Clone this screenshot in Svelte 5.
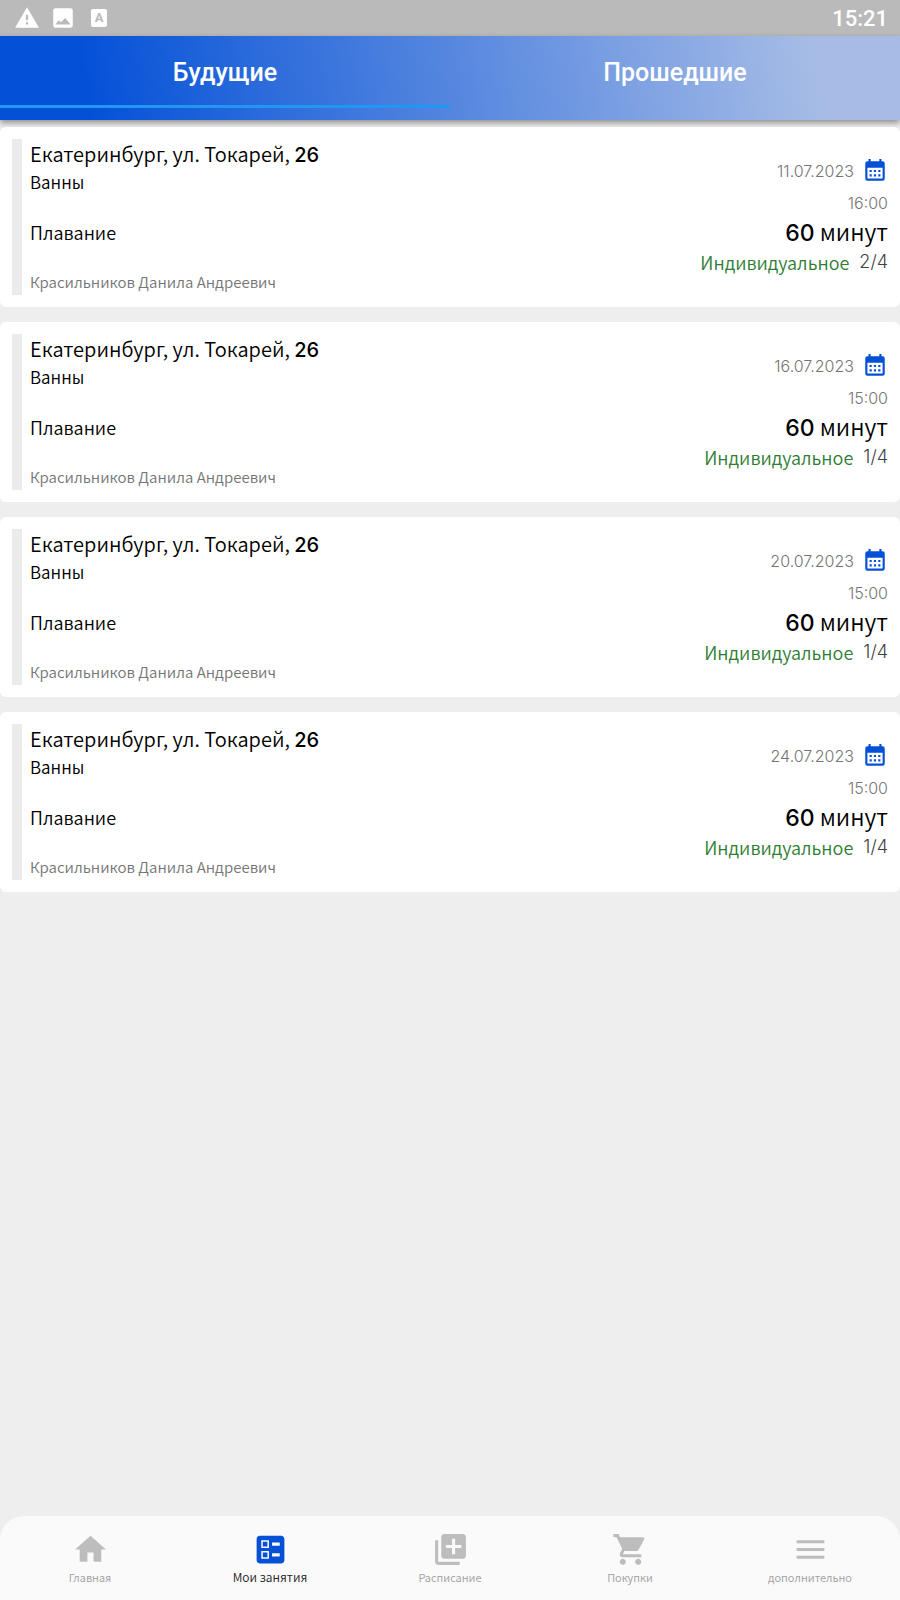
<script>
    let activeTab = "upcoming";
    let activePage = "lessons";

    const tabs = [
        { id: "upcoming", title: "Будущие" },
        { id: "past", title: "Прошедшие" },
    ];

    const lessons = [
        { date: "11.07.2023", time: "16:00", places: "2/4" },
        { date: "16.07.2023", time: "15:00", places: "1/4" },
        { date: "20.07.2023", time: "15:00", places: "1/4" },
        { date: "24.07.2023", time: "15:00", places: "1/4" },
    ];

    const pages = [
        {
            id: "home",
            title: "Главная",
            icon: "M10 20v-6h4v6h5v-8h3L12 3 2 12h3v8z",
        },
        {
            id: "lessons",
            title: "Мои занятия",
            icon: "M13 9.5h5v-2h-5v2zm0 7h5v-2h-5v2zM19 21H5c-1.1 0-2-.9-2-2V5c0-1.1.9-2 2-2h14c1.1 0 2 .9 2 2v14c0 1.1-.9 2-2 2zM6 11h5V6H6v5zm1-4h3v3H7V7zM6 18h5v-5H6v5zm1-4h3v3H7v-3z",
        },
        {
            id: "schedule",
            title: "Расписание",
            icon: "M4 6H2v14c0 1.1.9 2 2 2h14v-2H4V6zm16-4H8c-1.1 0-2 .9-2 2v12c0 1.1.9 2 2 2h12c1.1 0 2-.9 2-2V4c0-1.1-.9-2-2-2zm-1 9h-4v4h-2v-4H9V9h4V5h2v4h4v2z",
        },
        {
            id: "shop",
            title: "Покупки",
            icon: "M7 18c-1.1 0-1.99.9-1.99 2S5.9 22 7 22s2-.9 2-2-.9-2-2-2zM1 2v2h2l3.6 7.59-1.35 2.45c-.16.28-.25.61-.25.96 0 1.1.9 2 2 2h12v-2H7.42c-.14 0-.25-.11-.25-.25l.03-.12.9-1.63h7.45c.75 0 1.41-.41 1.75-1.03l3.58-6.49A1.003 1.003 0 0020 4H5.21l-.94-2H1zm16 16c-1.1 0-1.99.9-1.99 2s.89 2 1.99 2 2-.9 2-2-.9-2-2-2z",
        },
        {
            id: "more",
            title: "дополнительно",
            icon: "M3 18h18v-2H3v2zm0-5h18v-2H3v2zm0-7v2h18V6H3z",
        },
    ];
</script>

<div class="screen">
    <div class="status-bar">
        <div class="status-icons">
            <svg width="26" height="26" viewBox="0 0 24 24">
                <path d="M1 21h22L12 2 1 21zm12-3h-2v-2h2v2zm0-4h-2V9h2v5z" />
            </svg>
            <svg width="26" height="26" viewBox="0 0 24 24">
                <path
                    d="M21 19V5c0-1.1-.9-2-2-2H5c-1.1 0-2 .9-2 2v14c0 1.1.9 2 2 2h14c1.1 0 2-.9 2-2zM5 18l3-4 2 2 4-4 5 6H5z"
                />
            </svg>
            <span class="letter-icon">A</span>
        </div>
        <span class="clock">15:21</span>
    </div>

    <header class="tabs">
        {#each tabs as tab}
            <button
                class="tab"
                class:active={activeTab === tab.id}
                on:click={() => (activeTab = tab.id)}
            >
                {tab.title}
            </button>
        {/each}
    </header>

    <main class="lessons">
        {#each lessons as lesson}
            <article class="card">
                <div class="card-mark"></div>
                <div class="card-info">
                    <div class="address">
                        Екатеринбург, ул. Токарей, <span class="num">26</span>
                    </div>
                    <div class="room">Ванны</div>
                    <div class="service">Плавание</div>
                    <div class="trainer">Красильников Данила Андреевич</div>
                </div>
                <div class="card-side">
                    <div class="date">
                        {lesson.date}
                        <svg width="26" height="26" viewBox="0 0 24 24">
                            <path
                                d="M9 11v2H7v-2h2m4 0v2h-2v-2h2m4 0v2h-2v-2h2m2-8a2 2 0 0 1 2 2v14a2 2 0 0 1-2 2H5a2 2 0 0 1-2-2V5a2 2 0 0 1 2-2h1V1h2v2h8V1h2v2h1m0 16V9H5v10h14M9 15v2H7v-2h2m4 0v2h-2v-2h2m4 0v2h-2v-2h2z"
                            />
                        </svg>
                    </div>
                    <div class="time">{lesson.time}</div>
                    <div class="duration"><span class="num">60</span> минут</div>
                    <div class="kind">
                        Индивидуальное <span class="places">{lesson.places}</span>
                    </div>
                </div>
            </article>
        {/each}
    </main>

    <nav class="bottom-nav">
        {#each pages as page}
            <button
                class="nav-item"
                class:active={activePage === page.id}
                on:click={() => (activePage = page.id)}
            >
                <svg width="37" height="37" viewBox="0 0 24 24">
                    <path fill-rule="evenodd" d={page.icon} />
                </svg>
                <span class="nav-title">{page.title}</span>
            </button>
        {/each}
    </nav>
</div>

<style>
    :global(body) {
        background: #eeeeee;
    }

    .screen {
        display: flex;
        flex-direction: column;
        min-height: 100vh;
        font-family: "Noto Sans CJK JP", "Noto Sans", sans-serif;
        font-weight: 350;
        color: #000;
    }

    svg {
        display: block;
        fill: currentColor;
    }

    button {
        border: none;
        padding: 0;
        background: none;
        font-family: inherit;
        font-weight: inherit;
        cursor: pointer;
    }

    .status-bar {
        display: flex;
        align-items: center;
        justify-content: space-between;
        height: 36px;
        padding: 0 12px 0 14px;
        background: #bababa;
        color: #fff;
    }

    .status-icons {
        display: flex;
        align-items: center;
        gap: 10px;
    }

    .letter-icon {
        width: 16px;
        height: 18px;
        margin-left: 5px;
        border-radius: 2px;
        background: #fff;
        color: #bababa;
        font: bold 13px/18px Roboto, sans-serif;
        text-align: center;
    }

    .clock {
        padding-top: 2px;
        font: 500 22px/34px Roboto, sans-serif;
    }

    .tabs {
        display: flex;
        padding-bottom: 12px;
        background: linear-gradient(80deg, #0451d8 10%, #a6bce6 90%);
        box-shadow: 0 3px 6px rgba(0, 0, 0, 0.4);
    }

    .tab {
        flex: 1;
        height: 72px;
        padding-top: 3px;
        border-bottom: 3px solid transparent;
        color: #fff;
        font-family: Roboto, sans-serif;
        font-size: 25px;
        font-weight: 500;
    }

    .tab.active {
        border-bottom-color: #2196f3;
    }

    .lessons {
        flex: 1;
        display: flex;
        flex-direction: column;
        gap: 15px;
        padding: 7px 0 15px;
    }

    .card {
        display: flex;
        gap: 8px;
        padding: 12px;
        border-radius: 6px;
        background: #fff;
    }

    .card-mark {
        width: 10px;
        background: #ebebeb;
    }

    .card-info {
        flex: 1;
    }

    .num {
        font-family: Inter, sans-serif;
        font-weight: 500;
        line-height: 1;
    }

    .address {
        font-size: 20px;
        line-height: 30px;
    }

    .room {
        font-size: 17px;
        line-height: 26px;
    }

    .service {
        margin: 24px 0;
        font-size: 18px;
        line-height: 26px;
    }

    .trainer {
        color: #757575;
        font-size: 15px;
        line-height: 26px;
    }

    .card-side {
        display: flex;
        flex-direction: column;
        align-items: flex-end;
        justify-content: center;
    }

    .date,
    .time {
        color: #757575;
        font-family: Inter, sans-serif;
        font-size: 16px;
        line-height: 32px;
    }

    .date {
        display: flex;
        align-items: center;
        gap: 8px;
    }

    .date svg {
        color: #0451d8;
    }

    .duration {
        font-size: 23px;
        line-height: 24px;
    }

    .kind {
        display: flex;
        gap: 10px;
        color: #2e7d32;
        font-size: 18px;
        line-height: 34px;
    }

    .places {
        color: #424242;
        font-family: Inter, sans-serif;
        font-size: 18px;
    }

    .bottom-nav {
        display: flex;
        height: 84px;
        border-radius: 24px 24px 0 0;
        background: #fafafa;
    }

    .nav-item {
        flex: 1;
        display: flex;
        flex-direction: column;
        align-items: center;
        justify-content: center;
        color: #bdbdbd;
    }

    .nav-title {
        color: #9e9e9e;
        font-size: 11px;
        line-height: 18px;
    }

    .nav-item.active {
        color: #0451d8;
    }

    .nav-item.active .nav-title {
        color: #212121;
        font-size: 12px;
    }
</style>
